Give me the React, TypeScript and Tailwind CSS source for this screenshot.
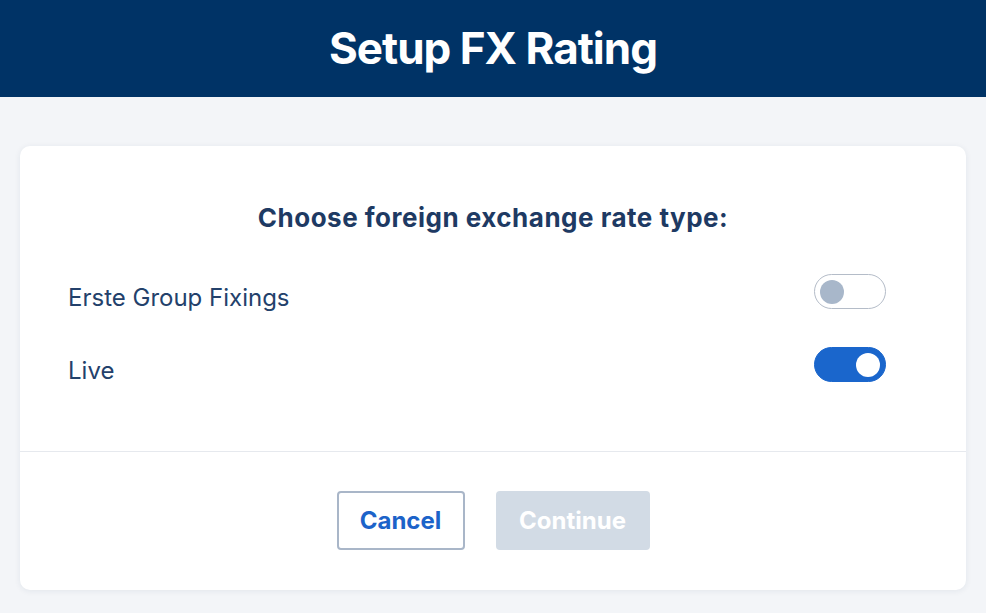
import React, { useState } from "react";

function Toggle({ on, onClick }: { on: boolean; onClick: () => void }) {
  return (
    <button
      onClick={onClick}
      className={
        on
          ? "w-[72px] h-[35px] rounded-full bg-[#1a66cc] flex items-center justify-end px-[5px] border border-[#1a66cc]"
          : "w-[72px] h-[35px] rounded-full bg-white flex items-center justify-start px-[5px] border border-[#b4bcc8]"
      }
    >
      <span
        className={
          on
            ? "block w-[24px] h-[24px] rounded-full bg-white"
            : "block w-[24px] h-[24px] rounded-full bg-[#a8b7ca]"
        }
      />
    </button>
  );
}

export default function App() {
  const [erste, setErste] = useState(false);
  const [live, setLive] = useState(true);
  return (
    <div className="min-h-[613px] w-full bg-[#f3f5f8] font-['Inter',sans-serif]">
      <header className="h-[97px] bg-[#003366] flex items-center justify-center">
        <h1 className="text-white text-[44px] font-bold tracking-[-1px] leading-[52px] -mt-[2px]">Setup FX Rating</h1>
      </header>
      <div className="px-[20px] pt-[49px] pb-[23px]">
        <div className="bg-white rounded-[10px] shadow-[0_1px_6px_rgba(30,50,90,0.08)]">
          <div className="px-[48px] pt-[56px] pb-[69px]">
            <h2 className="text-center text-[26px] font-bold text-[#1e3a63] leading-[32px] tracking-[0.5px]">
              Choose foreign exchange rate type:
            </h2>
            <div className="mt-[40px] flex items-center justify-between h-[35px]">
              <span className="text-[24px] text-[#23416b] leading-[30px] pt-[12px]">Erste Group Fixings</span>
              <div className="mr-[32px]">
                <Toggle on={erste} onClick={() => setErste(!erste)} />
              </div>
            </div>
            <div className="mt-[38px] flex items-center justify-between h-[35px]">
              <span className="text-[24px] text-[#23416b] leading-[30px] pt-[12px]">Live</span>
              <div className="mr-[32px]">
                <Toggle on={live} onClick={() => setLive(!live)} />
              </div>
            </div>
          </div>
          <div className="border-t border-[#e6e9ee] flex justify-center gap-[31px] pt-[39px] pb-[40px]">
            <button className="w-[128px] h-[59px] rounded-[4px] border-2 border-[#a9b6c8] text-[#1c63c9] text-[24px] font-bold">
              Cancel
            </button>
            <button className="w-[154px] h-[59px] rounded-[4px] bg-[#d2dbe5] text-white text-[24px] font-bold">
              Continue
            </button>
          </div>
        </div>
      </div>
    </div>
  );
}
